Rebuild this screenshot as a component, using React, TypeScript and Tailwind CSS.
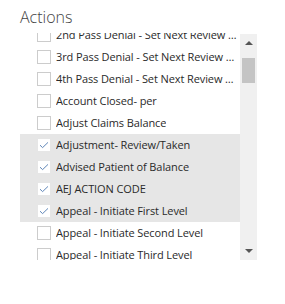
import React from "react";

const items: { label: string; checked: boolean }[] = [
  { label: "1st Pass Denial - Set Next Review Date", checked: false },
  { label: "2nd Pass Denial - Set Next Review Date", checked: false },
  { label: "3rd Pass Denial - Set Next Review Date", checked: false },
  { label: "4th Pass Denial - Set Next Review Date", checked: false },
  { label: "Account Closed- per", checked: false },
  { label: "Adjust Claims Balance", checked: false },
  { label: "Adjustment- Review/Taken", checked: true },
  { label: "Advised Patient of Balance", checked: true },
  { label: "AEJ ACTION CODE", checked: true },
  { label: "Appeal - Initiate First Level", checked: true },
  { label: "Appeal - Initiate Second Level", checked: false },
  { label: "Appeal - Initiate Third Level", checked: false },
  { label: "Appeal - Follow Up", checked: false },
];

function Row({ label, checked }: { label: string; checked: boolean }) {
  return (
    <div
      className={`flex h-[22px] items-center pl-[17px] pr-[1px] ${
        checked ? "bg-[#e6e6e6]" : "bg-white"
      }`}
    >
      <div
        className={`flex h-[14px] w-[14px] shrink-0 items-center justify-center border bg-white ${
          checked ? "border-[#e6e6e6]" : "border-[#cccccc]"
        }`}
      >
        {checked && (
          <svg width="10" height="8" viewBox="0 0 10 8" fill="none">
            <path d="M1 4.2 L3.6 6.6 L9 1.4" stroke="#5f86b8" strokeWidth="1" />
          </svg>
        )}
      </div>
      <span className="ml-[5px] truncate font-['Open_Sans',sans-serif] text-[11px] leading-[22px] tracking-[-0.1px] text-[#2a2a2a]">
        {label}
      </span>
    </div>
  );
}

export default function App() {
  return (
    <div className="h-[304px] w-[285px] bg-white pl-[20px]">
      <div className="pt-[6px] font-['Open_Sans',sans-serif] text-[16px] font-light leading-[22px] text-[#444444]">
        Actions
      </div>
      <div className="mt-[5px] flex h-[227px] w-[237px]">
        <div className="h-full w-[220px] overflow-hidden">
          <div className="-mt-[31px]">
            {items.map((it) => (
              <Row key={it.label} label={it.label} checked={it.checked} />
            ))}
          </div>
        </div>
        <div className="mt-[1px] flex h-[226px] w-[17px] flex-col items-center bg-[#f0f0f0]">
          <div className="mt-[7px] h-0 w-0 border-x-[4px] border-b-[4px] border-x-transparent border-b-[#555555]" />
          <div className="mt-[13px] h-[25px] w-[13px] bg-[#c4c4c4]" />
          <div className="flex-1" />
          <div className="mb-[7px] h-0 w-0 border-x-[4px] border-t-[4px] border-x-transparent border-t-[#555555]" />
        </div>
      </div>
    </div>
  );
}
